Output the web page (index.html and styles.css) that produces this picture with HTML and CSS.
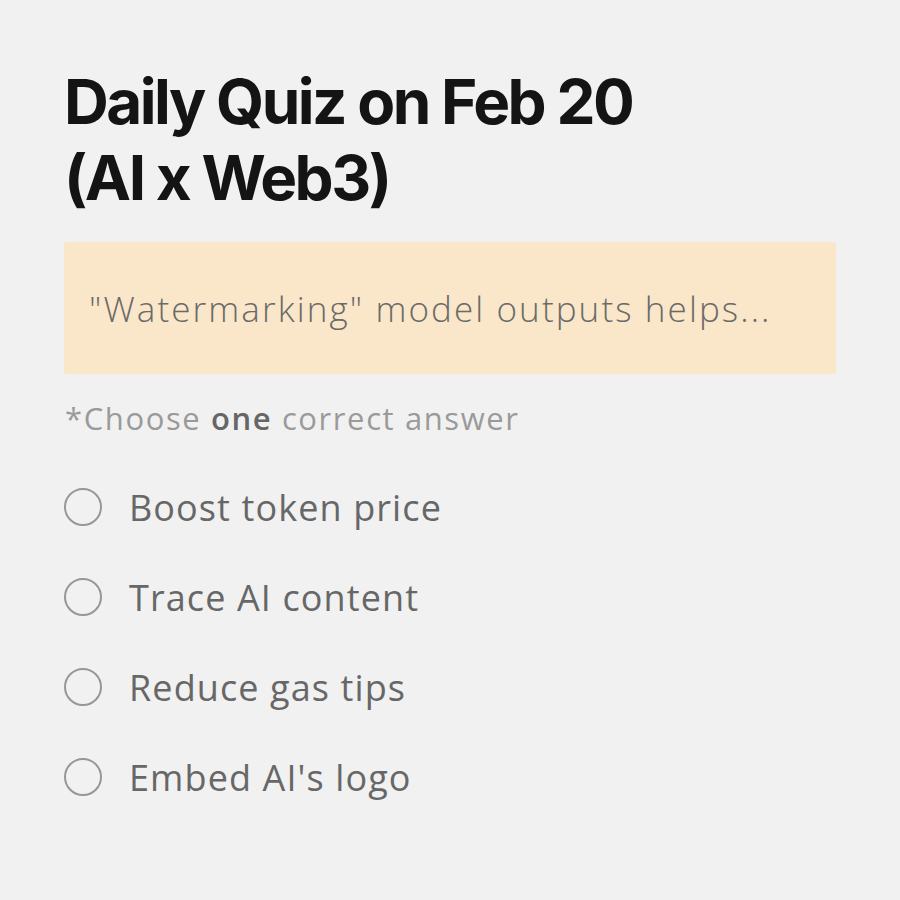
FILE: index.html
```html
<!DOCTYPE html>
<html>
<head>
<meta charset="utf-8">
<link rel="stylesheet" href="styles.css">
</head>
<body>
<main class="quiz">
  <h1 class="title">Daily Quiz on Feb 20<br>(AI x Web3)</h1>
  <div class="question">"Watermarking" model outputs helps...</div>
  <p class="hint">*Choose <b>one</b> correct answer</p>
  <ul class="options">
    <li class="option"><span class="radio"></span><span class="label">Boost token price</span></li>
    <li class="option"><span class="radio"></span><span class="label">Trace AI content</span></li>
    <li class="option"><span class="radio"></span><span class="label">Reduce gas tips</span></li>
    <li class="option"><span class="radio"></span><span class="label">Embed AI's logo</span></li>
  </ul>
</main>
</body>
</html>
```
FILE: styles.css
```css
html, body {
  margin: 0;
  padding: 0;
  background: #f1f1f1;
}
body {
  width: 900px;
  height: 900px;
  font-family: "Open Sans", "Noto Sans", sans-serif;
}
.quiz {
  padding: 64px 64px 0 64px;
}
.title {
  margin: 0;
  font-family: Inter, sans-serif;
  font-weight: 700;
  font-size: 62px;
  line-height: 76px;
  letter-spacing: -2.5px;
  color: #141414;
}
.question {
  margin-top: 26px;
  background: #fae6c8;
  border-radius: 3px;
  height: 132px;
  box-sizing: border-box;
  padding-left: 25px;
  display: flex;
  align-items: center;
  font-size: 35px;
  font-weight: 300;
  color: #6a6a6a;
  letter-spacing: 2.1px;
}
.hint {
  margin: 24px 0 0 1px;
  font-size: 31px;
  font-weight: 400;
  color: #9a9a9a;
  line-height: 40px;
  letter-spacing: 1.6px;
}
.hint b {
  font-weight: 600;
  color: #666;
}
.options {
  list-style: none;
  margin: 44px 0 0 0;
  padding: 0;
  display: flex;
  flex-direction: column;
  gap: 40px;
}
.option {
  display: flex;
  align-items: center;
  height: 50px;
}
.radio {
  width: 34px;
  height: 34px;
  border: 2px solid #979797;
  border-radius: 50%;
  flex: none;
}
.label {
  margin-left: 27px;
  font-size: 36px;
  font-weight: 500;
  color: #676767;
  letter-spacing: 1.1px;
}
```
